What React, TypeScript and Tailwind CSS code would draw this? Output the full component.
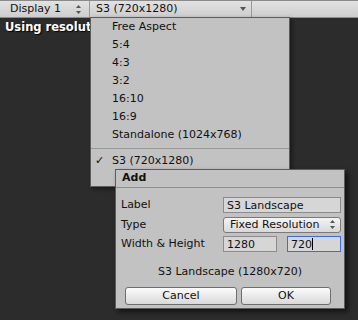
const items = ['Free Aspect', '5:4', '4:3', '3:2', '16:10', '16:9', 'Standalone (1024x768)']

function UpDown() {
  return (
    <svg width="5" height="9" viewBox="0 0 5 9" className="fill-[#555]">
      <path d="M2.5 0 L5 3 L0 3 Z" />
      <path d="M0 6 L5 6 L2.5 9 Z" />
    </svg>
  )
}

function Input({ value, focused }: { value: string; focused?: boolean }) {
  return (
    <div
      className={
        'h-[16px] flex items-center px-[3px] bg-[#d6d6d6] border ' +
        (focused ? 'border-[#3c6fd6]' : 'border-[#8c8c8c]')
      }
    >
      <span className="leading-none">{value}</span>
      {focused && <span className="w-px h-[12px] bg-black" />}
    </div>
  )
}

export default function App() {
  return (
    <div className="relative w-[358px] h-[320px] overflow-hidden bg-[#2c2c2c] text-[11px] text-[#111] font-['DejaVu_Sans',sans-serif]">
      {/* toolbar */}
      <div className="flex h-[18px] border-t border-b border-t-[#8a8a8a] border-b-[#8c8c8c] bg-gradient-to-b from-[#e2e2e2] to-[#cdcdcd]">
        <div className="w-[90px] flex items-center justify-between pl-[10px] pr-[8px] border-r border-[#9a9a9a]">
          <span>Display 1</span>
          <UpDown />
        </div>
        <div className="w-[162px] flex items-center justify-between pl-[6px] pr-[5px] border-r border-[#9a9a9a]">
          <span>S3 (720x1280)</span>
          <svg width="6" height="4" viewBox="0 0 6 4" className="fill-[#555]">
            <path d="M0 0 L6 0 L3 4 Z" />
          </svg>
        </div>
      </div>

      {/* game view, mostly covered by the menu */}
      <div className="w-[90px] overflow-hidden whitespace-nowrap pl-[5px] pt-[1px] text-[11.5px] font-bold text-white [text-shadow:1px_1px_1px_#000]">
        Using resolution scale 1x
      </div>

      {/* resolution menu */}
      <div className="absolute left-[90px] top-[17px] w-[200px] h-[170px] bg-[#c2c2c2] border border-[#5c5c5c] shadow-[2px_2px_4px_rgba(0,0,0,0.45)]">
        {items.map((item) => (
          <div key={item} className="h-[18px] flex items-center pl-[21px]">
            {item}
          </div>
        ))}
        <div className="h-[8px] flex items-center">
          <div className="w-full h-px bg-[#979797]" />
        </div>
        <div className="h-[18px] flex items-center">
          <span className="w-[21px] pl-[4px]">✓</span>
          <span>S3 (720x1280)</span>
        </div>
      </div>

      {/* add dialog */}
      <div className="absolute left-[115px] top-[169px] w-[230px] h-[140px] bg-[#c2c2c2] border border-[#5c5c5c] shadow-[3px_3px_5px_rgba(0,0,0,0.6)] flex flex-col">
        <div className="h-[18px] flex items-center pl-[6px] font-bold border-b border-[#8f8f8f]">Add</div>
        <div className="flex flex-col gap-[3px] pt-[9px] pl-[5px] pr-[3px]">
          <div className="flex items-center">
            <span className="w-[102px]">Label</span>
            <div className="flex-1">
              <Input value="S3 Landscape" />
            </div>
          </div>
          <div className="flex items-center">
            <span className="w-[102px]">Type</span>
            <div className="flex-1 h-[16px] flex items-center justify-between pl-[6px] pr-[5px] rounded-[3px] border border-[#7a7a7a] bg-gradient-to-b from-[#f4f4f4] to-[#d8d8d8]">
              <span>Fixed Resolution</span>
              <UpDown />
            </div>
          </div>
          <div className="flex items-center">
            <span className="w-[102px]">Width &amp; Height</span>
            <div className="flex-1 flex gap-[10px]">
              <div className="flex-1">
                <Input value="1280" />
              </div>
              <div className="flex-1">
                <Input value="720" focused />
              </div>
            </div>
          </div>
        </div>
        <div className="text-center pt-[11px]">S3 Landscape (1280x720)</div>
        <div className="flex gap-[4px] pl-[9px] pr-[13px] pt-[7px]">
          <div className="w-[112px] h-[18px] flex items-center justify-center rounded-[3px] border border-[#6e6e6e] bg-gradient-to-b from-[#fbfbfb] to-[#d9d9d9]">
            Cancel
          </div>
          <div className="flex-1 h-[18px] flex items-center justify-center rounded-[3px] border border-[#6e6e6e] bg-gradient-to-b from-[#fbfbfb] to-[#d9d9d9]">
            OK
          </div>
        </div>
      </div>
    </div>
  )
}
